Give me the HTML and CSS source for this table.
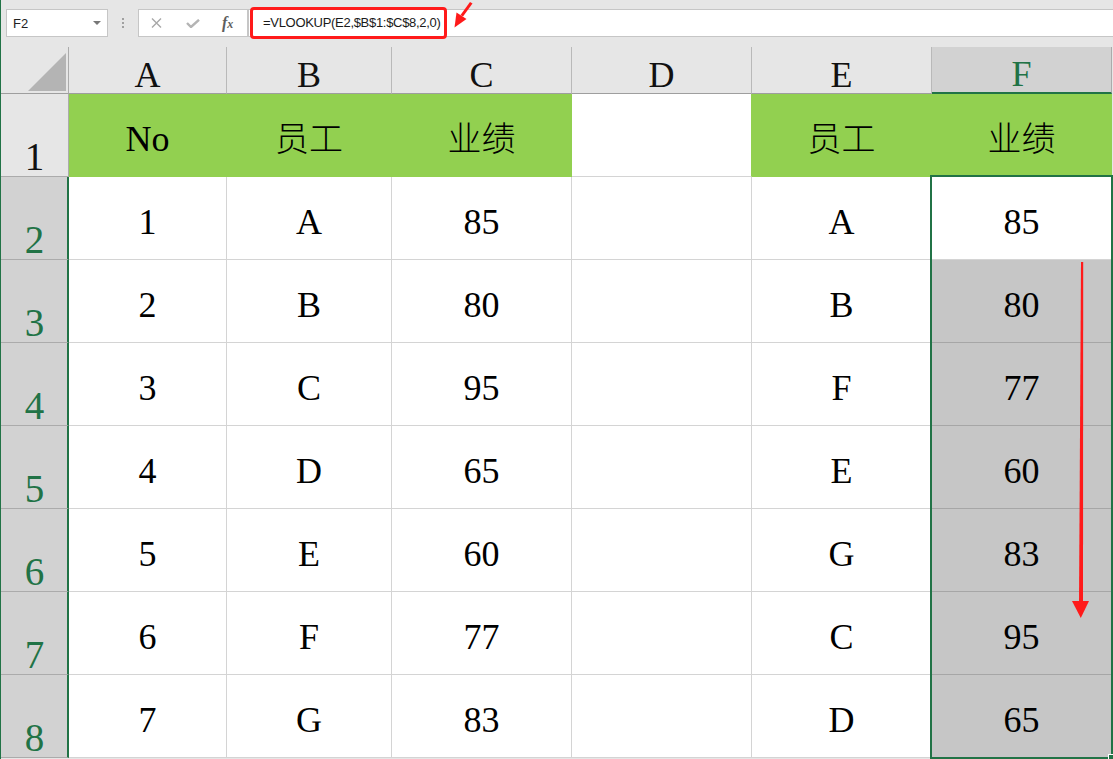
FILE: index.html
```html
<!DOCTYPE html>
<html lang="zh">
<head>
<meta charset="utf-8">
<title>VLOOKUP</title>
<link rel="stylesheet" href="styles.css">
</head>
<body>
<div class="app">
  <div class="toolbar">
    <div class="namebox"><span class="nb-text">F2</span><span class="caret"></span></div>
    <div class="dots"><i></i><i></i><i></i></div>
    <div class="fbtns">
      <svg class="ic-x" width="11" height="10" viewBox="0 0 11 10"><path d="M1 0.5 L10 9.5 M10 0.5 L1 9.5" stroke="#a8a8a8" stroke-width="1.4" fill="none"/></svg>
      <svg class="ic-ok" width="14" height="9" viewBox="0 0 14 9"><path d="M1 4 L5 8 L13 0.8" stroke="#b4b4b4" stroke-width="2.4" fill="none"/></svg>
      <span class="fx">f<span class="fx-x">x</span></span>
    </div>
    <div class="finput"><span class="formula">=VLOOKUP(E2,$B$1:$C$8,2,0)</span></div>
  </div>
  <div class="sheet">
    <div class="corner"><span class="tri"></span></div>
    <div class="ch">A</div>
    <div class="ch">B</div>
    <div class="ch">C</div>
    <div class="ch">D</div>
    <div class="ch">E</div>
    <div class="ch ch-sel">F</div>

    <div class="rh">1</div>
    <div class="c g">No</div>
    <div class="c g cjk">员工</div>
    <div class="c g cjk">业绩</div>
    <div class="c d1"></div>
    <div class="c g cjk">员工</div>
    <div class="c g cjk">业绩</div>

    <div class="rh rh-sel">2</div>
    <div class="c">1</div><div class="c">A</div><div class="c">85</div><div class="c"></div><div class="c">A</div><div class="c">85</div>
    <div class="rh rh-sel">3</div>
    <div class="c">2</div><div class="c">B</div><div class="c">80</div><div class="c"></div><div class="c">B</div><div class="c s">80</div>
    <div class="rh rh-sel">4</div>
    <div class="c">3</div><div class="c">C</div><div class="c">95</div><div class="c"></div><div class="c">F</div><div class="c s">77</div>
    <div class="rh rh-sel">5</div>
    <div class="c">4</div><div class="c">D</div><div class="c">65</div><div class="c"></div><div class="c">E</div><div class="c s">60</div>
    <div class="rh rh-sel">6</div>
    <div class="c">5</div><div class="c">E</div><div class="c">60</div><div class="c"></div><div class="c">G</div><div class="c s">83</div>
    <div class="rh rh-sel">7</div>
    <div class="c">6</div><div class="c">F</div><div class="c">77</div><div class="c"></div><div class="c">C</div><div class="c s">95</div>
    <div class="rh rh-sel">8</div>
    <div class="c">7</div><div class="c">G</div><div class="c">83</div><div class="c"></div><div class="c">D</div><div class="c s">65</div>

    <div class="selection"><span class="handle"></span></div>
  </div>
  <svg class="marks" width="1113" height="759" viewBox="0 0 1113 759">
    <polygon points="470,2 472.5,3.5 463,16.5 460.5,15" fill="#ff1a1a"/>
    <polygon points="454.5,27.5 456.5,12.5 466.5,19" fill="#ff1a1a"/>
    <polygon points="1081,262 1083.2,262 1083,604 1079,604" fill="#ff1a1a"/>
    <polygon points="1072,601 1089,601 1080.8,618" fill="#ff1a1a"/>
  </svg>
</div>
</body>
</html>
```
FILE: styles.css
```css
* { box-sizing: border-box; }
body {
  margin: 0;
  font-family: "Liberation Serif", "Noto Sans CJK SC", serif;
  background: #e6e6e6;
}
.app {
  position: relative;
  width: 1113px;
  height: 759px;
  overflow: hidden;
  background: #e6e6e6;
  border-left: 1px solid #217346;
}

/* ---------- formula bar ---------- */
.toolbar {
  height: 47px;
  display: flex;
  align-items: flex-start;
  padding-top: 9px;
  font-family: "Liberation Sans", "Noto Sans", sans-serif;
}
.namebox {
  margin-left: 5px;
  width: 102px;
  height: 28px;
  background: #fff;
  border: 1px solid #c6c6c6;
  display: flex;
  align-items: center;
  justify-content: space-between;
  padding: 0 6px;
}
.nb-text {
  font-size: 13px;
  color: #222;
}
.caret {
  width: 0;
  height: 0;
  border-left: 4px solid transparent;
  border-right: 4px solid transparent;
  border-top: 4px solid #777;
}
.dots {
  width: 30px;
  height: 28px;
  display: flex;
  flex-direction: column;
  align-items: center;
  justify-content: center;
  gap: 2px;
}
.dots i {
  width: 2px;
  height: 2px;
  background: #a0a0a0;
}
.fbtns {
  width: 110px;
  height: 28px;
  background: #fff;
  border: 1px solid #c6c6c6;
  display: flex;
  align-items: center;
  padding-left: 12px;
  gap: 24px;
}
.ic-ok { margin-top: 1px; }
.fx {
  font-family: "Liberation Serif", serif;
  font-style: italic;
  font-weight: bold;
  font-size: 16px;
  color: #5e5e5e;
  margin-left: -2px;
  margin-top: -1px;
}
.fx-x { font-size: 12px; }
.finput {
  flex: 1;
  height: 28px;
  background: #fff;
  border: 1px solid #c6c6c6;
  border-right: none;
  display: flex;
  align-items: center;
  padding-left: 1px;
}
.formula {
  width: 197px;
  height: 32px;
  border: 3px solid #ff1a1a;
  border-radius: 4px;
  padding-left: 10px;
  line-height: 26px;
  font-size: 13px;
  letter-spacing: -0.3px;
  color: #1a1a1a;
  white-space: nowrap;
}

/* ---------- sheet ---------- */
.sheet {
  position: relative;
  display: grid;
  grid-template-columns: 68px 158px 165px 180px 180px 180px 180px;
  grid-template-rows: 47px repeat(8, 83px);
}
.corner {
  background: #e6e6e6;
  border-right: 1px solid #ababab;
  border-bottom: 1px solid #9e9e9e;
  display: flex;
  align-items: flex-end;
  justify-content: flex-end;
  padding: 0 2px 2px 0;
}
.tri {
  width: 0;
  height: 0;
  border-left: 38px solid transparent;
  border-bottom: 38px solid #b4b4b4;
}
.ch {
  background: #e6e6e6;
  border-right: 1px solid #b9b9b9;
  border-bottom: 1px solid #9e9e9e;
  display: flex;
  justify-content: center;
  align-items: flex-end;
  font-size: 36px;
  line-height: 36px;
  color: #111;
}
.ch-sel {
  background: #d2d2d2;
  color: #217346;
  border-right-color: #ababab;
  border-bottom: 2px solid #217346;
}
.rh {
  background: #e6e6e6;
  border-right: 1px solid #ababab;
  border-bottom: 1px solid #ababab;
  display: flex;
  justify-content: center;
  align-items: flex-end;
  font-size: 39px;
  line-height: 39px;
  color: #111;
}
.rh-sel {
  background: #d2d2d2;
  color: #217346;
  border-right: 2px solid #217346;
  padding-left: 1px;
}
.c {
  background: #fff;
  border-right: 1px solid #d4d4d4;
  border-bottom: 1px solid #d4d4d4;
  display: flex;
  justify-content: center;
  align-items: center;
  padding-top: 8px;
  font-size: 36px;
  line-height: 36px;
  color: #000;
}
.c.g {
  background: #92d050;
  border-color: #92d050;
}
.c.cjk {
  font-family: "Noto Sans CJK SC", sans-serif;
  font-weight: 300;
  font-size: 34px;
  padding-top: 4px;
}
.c.d1 { border-right-color: #92d050; }
.c.s {
  background: #c6c6c6;
  border-right-color: #a6a6a6;
  border-bottom-color: #a6a6a6;
}
.selection {
  position: absolute;
  left: 929px;
  top: 128px;
  width: 183px;
  height: 584px;
  border: 2px solid #217346;
  pointer-events: none;
}
.handle {
  position: absolute;
  right: -4px;
  bottom: -4px;
  width: 7px;
  height: 7px;
  background: #217346;
  border: 1px solid #fff;
}
.marks {
  position: absolute;
  left: -1px;
  top: 0;
  pointer-events: none;
}
```
